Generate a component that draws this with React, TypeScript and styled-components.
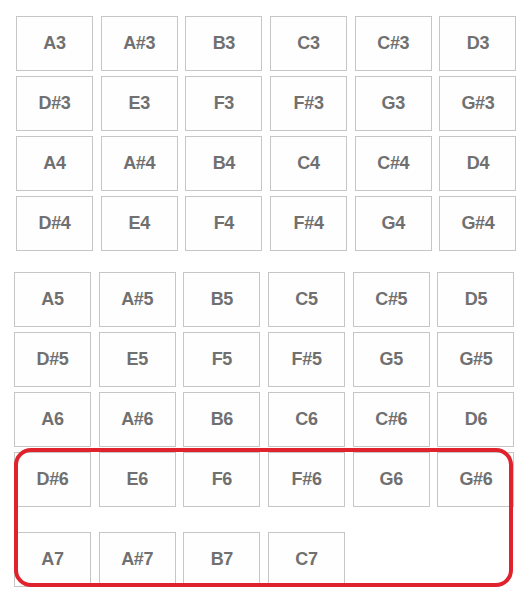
import React from "react"
import styled, { createGlobalStyle } from "styled-components"

const topNotes = [
  ["A3", "A#3", "B3", "C3", "C#3", "D3"],
  ["D#3", "E3", "F3", "F#3", "G3", "G#3"],
  ["A4", "A#4", "B4", "C4", "C#4", "D4"],
  ["D#4", "E4", "F4", "F#4", "G4", "G#4"],
]

const bottomNotes = [
  ["A5", "A#5", "B5", "C5", "C#5", "D5"],
  ["D#5", "E5", "F5", "F#5", "G5", "G#5"],
  ["A6", "A#6", "B6", "C6", "C#6", "D6"],
]

const highlightedNotes = [
  ["D#6", "E6", "F6", "F#6", "G6", "G#6"],
  ["A7", "A#7", "B7", "C7"],
]

const GlobalStyle = createGlobalStyle`
  html, body {
    margin: 0;
    padding: 0;
    background: #ffffff;
  }
  body {
    font-family: "Liberation Sans", Arial, sans-serif;
  }
`

function KeyGrid({ rows, gap = 5 }: { rows: string[][]; gap?: number }) {
  return (
    <S.Grid $rowGap={gap}>
      {rows.flat().map((note) => (
        <S.Key key={note}>{note}</S.Key>
      ))}
    </S.Grid>
  )
}

export default function App() {
  return (
    <S.Page>
      <GlobalStyle />
      <S.Group $offset={16}>
        <KeyGrid rows={topNotes} />
      </S.Group>
      <S.Group $offset={14}>
        <KeyGrid rows={bottomNotes} />
        <S.Highlight>
          <KeyGrid rows={highlightedNotes} gap={25} />
        </S.Highlight>
      </S.Group>
    </S.Page>
  )
}

const S = {
  Page: styled.div`
    display: flex;
    flex-direction: column;
    gap: 21px;
    width: 532px;
    height: 604px;
    padding-top: 16px;
    box-sizing: border-box;
    overflow: hidden;
  `,
  Group: styled.div<{ $offset: number }>`
    display: flex;
    flex-direction: column;
    gap: 5px;
    padding-left: ${(p) => p.$offset}px;
  `,
  Grid: styled.div<{ $rowGap: number }>`
    display: grid;
    grid-template-columns: repeat(6, 77px);
    grid-auto-rows: 55px;
    column-gap: 7.7px;
    row-gap: ${(p) => p.$rowGap}px;
  `,
  Key: styled.div`
    display: flex;
    align-items: center;
    justify-content: center;
    box-sizing: border-box;
    border: 1px solid #c6c6c6;
    background: #fefefe;
    color: #707070;
    font-size: 18px;
    font-weight: 700;
    letter-spacing: -0.3px;
  `,
  Highlight: styled.div`
    position: relative;
    width: 501px;

    &::after {
      content: "";
      position: absolute;
      top: -4px;
      left: 0;
      right: 2px;
      bottom: 0;
      border: 4px solid #e0222c;
      border-radius: 17px;
      pointer-events: none;
      box-sizing: border-box;
    }
  `,
}
